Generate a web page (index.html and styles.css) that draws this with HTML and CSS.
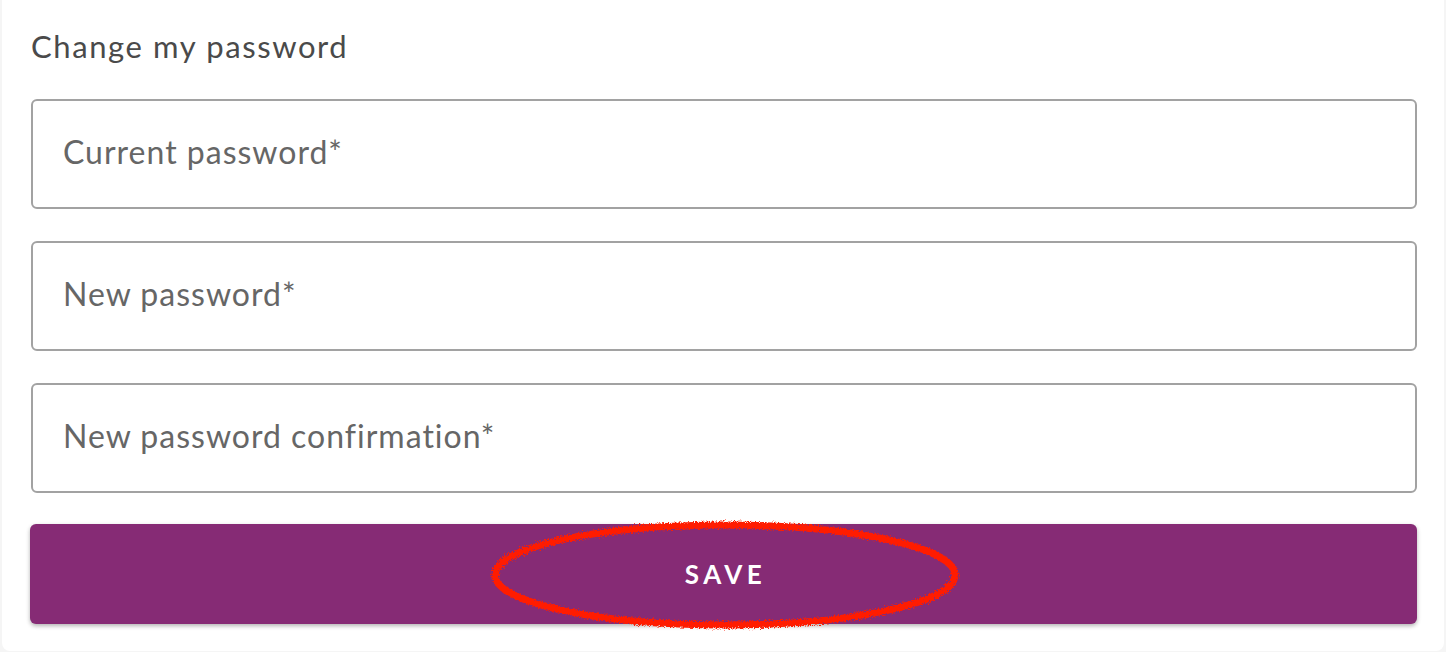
FILE: index.html
```html
<!DOCTYPE html>
<html lang="en">
<head>
    <meta charset="UTF-8">
    <meta name="viewport" content="width=device-width, initial-scale=1.0">
    <title>Change my password</title>
    <link rel="stylesheet" href="styles.css">
</head>
<body>

    <div class="card">
        <h2 class="card-title">Change my password</h2>

        <form class="password-form" onsubmit="return false;">
            <input type="password" class="field" placeholder="Current password*">
            <input type="password" class="field" placeholder="New password*">
            <input type="password" class="field" placeholder="New password confirmation*">

            <div class="save-wrap">
                <button type="submit" class="save-btn">SAVE</button>

                <!-- hand drawn marker around the button label -->
                <svg class="scribble" width="476" height="118" viewBox="0 0 476 118">
                    <defs>
                        <filter id="rough" x="-5%" y="-10%" width="110%" height="120%">
                            <feTurbulence type="fractalNoise" baseFrequency="0.8" numOctaves="3" seed="5"/>
                            <feDisplacementMap in="SourceGraphic" scale="6"/>
                        </filter>
                    </defs>
                    <ellipse cx="238" cy="57" rx="230" ry="50" fill="none" stroke="#ff1c00" stroke-width="7" filter="url(#rough)"/>
                </svg>
            </div>
        </form>
    </div>

</body>
</html>
```

FILE: styles.css
```css
body {
    margin: 0;
    padding: 0;
    background-color: #f5f5f5;
    font-family: 'Lato', 'Open Sans', sans-serif;
}


.card {
    margin: 0 2px;
    height: 651px;
    box-sizing: border-box;
    padding: 24px 27px 0 28px;
    background-color: #fff;
    border-radius: 0 0 8px 8px;
}


.card-title {
    margin: 0 0 0 1px;
    font-size: 31px;
    font-weight: normal;
    line-height: 44px;
    color: #4a4a4a;
    letter-spacing: 1.6px;
}


.password-form {
    display: flex;
    flex-direction: column;
    gap: 32px;
    margin-top: 31px;
}


.field {
    height: 110px;
    box-sizing: border-box;
    padding: 0 30px 6px 30px;
    border: 2px solid #a2a2a2;
    border-radius: 6px;
    font-family: inherit;
    font-size: 32px;
    letter-spacing: 1px;
    color: #4a4a4a;
    background-color: #fff;
    margin-left: 1px;
    width: calc(100% - 1px);
}

.field::placeholder {
    color: #666;
}


.save-wrap {
    position: relative;
    margin-top: -1px;
}

.save-btn {
    display: block;
    width: 100%;
    height: 100px;
    padding: 0 0 0 4px;
    border: none;
    border-radius: 6px;
    background-color: #862b75;
    color: #fff;
    font-family: inherit;
    font-size: 26px;
    font-weight: bold;
    letter-spacing: 4.5px;
    box-shadow: 0 2px 4px rgba(0, 0, 0, 0.3);
    cursor: pointer;
}


.scribble {
    position: absolute;
    left: 457px;
    top: -6px;
    pointer-events: none;
}
```
